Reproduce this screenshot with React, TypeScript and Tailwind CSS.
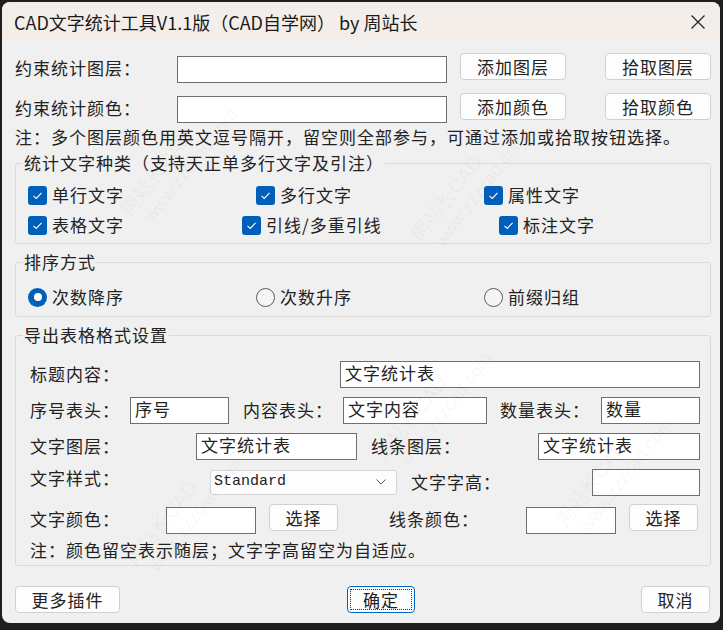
import React from 'react';

const inputCls = 'h-[27px] bg-white border border-[#6f6f6f] pl-[4px] text-[17px] tracking-[1px] leading-[22px] text-[#222] overflow-hidden whitespace-nowrap';
const btnCls = 'h-[27px] bg-[#fdfdfd] border border-[#d0d0d0] rounded-[4px] flex items-center justify-center text-[17px] tracking-[1px] text-[#222]';

function Input({ w, value = '' }: { w: string; value?: string }) {
  return <div className={`${inputCls} ${w}`}>{value}</div>;
}

function Button({ w, label, extra = '' }: { w: string; label: string; extra?: string }) {
  return <div className={`${btnCls} ${w} ${extra}`}>{label}</div>;
}

function Check({ label, w }: { label: string; w: string }) {
  return (
    <div className={`flex items-center ${w}`}>
      <div className="w-[19px] h-[19px] rounded-[3px] bg-[#005fb8] flex items-center justify-center shrink-0">
        <svg width="13" height="13" viewBox="0 0 13 13">
          <path d="M2.5 6.8 L5.2 9.4 L10.6 3.8" stroke="white" strokeWidth="1.1" fill="none" />
        </svg>
      </div>
      <span className="ml-[5px] whitespace-nowrap">{label}</span>
    </div>
  );
}

function Radio({ label, w, on = false }: { label: string; w: string; on?: boolean }) {
  return (
    <div className={`flex items-center ${w}`}>
      {on ? (
        <div className="w-[19px] h-[19px] rounded-full bg-[#005fb8] flex items-center justify-center shrink-0">
          <div className="w-[8px] h-[8px] rounded-full bg-white" />
        </div>
      ) : (
        <div className="w-[19px] h-[19px] rounded-full border border-[#5c5c5c] bg-[#f5f5f5] shrink-0" />
      )}
      <span className="ml-[5px] whitespace-nowrap">{label}</span>
    </div>
  );
}

function Group({ title, children, extra = '' }: { title: string; children: React.ReactNode; extra?: string }) {
  return (
    <fieldset className={`border border-[#dadada] rounded-[3px] ${extra}`}>
      <legend className="ml-[7px] px-[1px] leading-[20px]">{title}</legend>
      {children}
    </fieldset>
  );
}

// faint diagonal watermark of the original screenshot
const marks = [
  { x: 105, y: 140 },
  { x: 395, y: 165 },
  { x: 110, y: 490 },
  { x: 360, y: 385 },
  { x: 540, y: 450 },
];

export default function App() {
  return (
    <div className="w-[723px] h-[630px] bg-[#1f1f1f] pt-[2px] pl-[2px] overflow-hidden relative font-['Noto_Sans_CJK_SC',sans-serif]">
      <div className="w-[718px] h-[621px] rounded-[8px] overflow-hidden bg-[#f0f0f0] flex flex-col text-[17px] tracking-[1px] text-[#222]">
        {/* title bar */}
        <div className="h-[40px] bg-[#f3eeea] flex items-center shrink-0">
          <span className="ml-[12px] text-[18px] tracking-normal text-[#1a1a1a] whitespace-nowrap">
            CAD文字统计工具V1.1版（CAD自学网） by 周站长
          </span>
          <svg className="ml-auto mr-[14px]" width="16" height="16" viewBox="0 0 16 16">
            <path d="M1.5 1.5 L14.5 14.5 M14.5 1.5 L1.5 14.5" stroke="#222" strokeWidth="1.2" />
          </svg>
        </div>

        <div className="pl-[13px] pr-[9px]">
          {/* row 1 */}
          <div className="mt-[11px] h-[30px] flex items-start">
            <div className="w-[162px] h-[30px] flex items-center">约束统计图层：</div>
            <Input w="w-[270px] mt-[3px]" />
            <Button w="w-[106px] ml-[13px]" label="添加图层" />
            <Button w="w-[106px] ml-[39px]" label="拾取图层" />
          </div>
          {/* row 2 */}
          <div className="mt-[10px] h-[30px] flex items-start">
            <div className="w-[162px] h-[30px] flex items-center">约束统计颜色：</div>
            <Input w="w-[270px] mt-[3px] h-[26px]" />
            <Button w="w-[106px] ml-[13px]" label="添加颜色" />
            <Button w="w-[106px] ml-[39px]" label="拾取颜色" />
          </div>
          <div className="mt-[5px] leading-[18px] whitespace-nowrap">
            注：多个图层颜色用英文逗号隔开，留空则全部参与，可通过添加或拾取按钮选择。
          </div>

          <Group title="统计文字种类（支持天正单多行文字及引注）" extra="mt-[7px]">
            <div className="pl-[12px] pt-[7px] pb-[3px]">
              <div className="h-[30px] flex items-center">
                <Check w="w-[228px]" label="单行文字" />
                <Check w="w-[228px]" label="多行文字" />
                <Check w="" label="属性文字" />
              </div>
              <div className="h-[30px] flex items-center">
                <Check w="w-[214px]" label="表格文字" />
                <Check w="w-[257px]" label="引线/多重引线" />
                <Check w="" label="标注文字" />
              </div>
            </div>
          </Group>

          <Group title="排序方式" extra="mt-[8px]">
            <div className="pl-[12px] pt-[10px] pb-[4px]">
              <div className="h-[30px] flex items-center">
                <Radio w="w-[228px]" label="次数降序" on />
                <Radio w="w-[228px]" label="次数升序" />
                <Radio w="" label="前缀归组" />
              </div>
            </div>
          </Group>

          <Group title="导出表格格式设置" extra="mt-[8px]">
            <div className="pl-[14px] pt-[14px] pb-[6px]">
              <div className="h-[30px] flex items-center">
                <div className="w-[310px]">标题内容：</div>
                <Input w="w-[360px] h-[26px]" value="文字统计表" />
              </div>
              <div className="mt-[6px] h-[30px] flex items-center">
                <div className="w-[100px]">序号表头：</div>
                <Input w="w-[99px] h-[26px]" value="序号" />
                <div className="w-[100px] ml-[14px]">内容表头：</div>
                <Input w="w-[144px] h-[26px]" value="文字内容" />
                <div className="w-[101px] ml-[13px]">数量表头：</div>
                <Input w="w-[99px] h-[26px]" value="数量" />
              </div>
              <div className="mt-[6px] h-[30px] flex items-center">
                <div className="w-[166px]">文字图层：</div>
                <Input w="w-[161px] h-[26px]" value="文字统计表" />
                <div className="w-[167px] ml-[14px]">线条图层：</div>
                <Input w="w-[162px] h-[26px]" value="文字统计表" />
              </div>
              <div className="mt-[6px] h-[30px] flex items-center">
                <div className="w-[180px] -mt-[8px]">文字样式：</div>
                <div className="w-[187px] h-[25px] bg-[#fdfdfd] border border-[#d5d5d5] rounded-[3px] flex items-center pl-[3px] pr-[10px]">
                  <span className="font-['Liberation_Mono',monospace] text-[15px] tracking-normal">Standard</span>
                  <svg className="ml-auto" width="10" height="6" viewBox="0 0 10 6">
                    <path d="M0.5 0.5 L5 5 L9.5 0.5" stroke="#555" strokeWidth="1" fill="none" />
                  </svg>
                </div>
                <div className="w-[181px] ml-[14px]">文字字高：</div>
                <Input w="w-[108px] h-[26px]" />
              </div>
              <div className="mt-[7px] h-[30px] flex items-center">
                <div className="w-[136px]">文字颜色：</div>
                <Input w="w-[90px] h-[26px] mt-[3px]" />
                <Button w="w-[69px] ml-[13px] -mt-[3px]" label="选择" />
                <div className="w-[137px] ml-[51px]">线条颜色：</div>
                <Input w="w-[90px] h-[26px] mt-[3px]" />
                <Button w="w-[69px] ml-[13px] -mt-[3px]" label="选择" />
              </div>
              <div className="mt-[7px] leading-[18px] whitespace-nowrap">注：颜色留空表示随层；文字字高留空为自适应。</div>
            </div>
          </Group>

          <div className="mt-[20px] flex items-center">
            <Button w="w-[105px]" label="更多插件" />
            <div className="ml-[227px] w-[68px] h-[27px] rounded-[4px] border border-[#0067c0] bg-[#fdfdfd] p-[2px]">
              <div className="w-full h-full border border-dotted border-[#333] flex items-center justify-center">确定</div>
            </div>
            <Button w="w-[69px] ml-[226px]" label="取消" />
          </div>
        </div>
      </div>

      {marks.map((m, i) => (
        <div
          key={i}
          className="absolute pointer-events-none -rotate-[52deg] text-[#000]/[0.045] leading-[22px] font-['Liberation_Sans',sans-serif] whitespace-nowrap"
          style={{ left: m.x, top: m.y }}
        >
          <div className="text-[20px]">周站长CAD</div>
          <div className="text-[18px] ml-[10px]">www.zzzcad.com</div>
        </div>
      ))}
    </div>
  );
}
